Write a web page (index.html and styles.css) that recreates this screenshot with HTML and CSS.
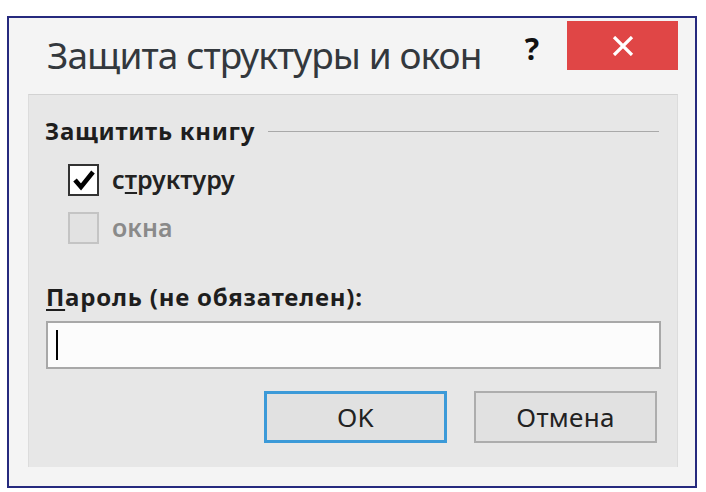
FILE: index.html
```html
<!DOCTYPE html>
<html lang="ru">
<head>
<meta charset="utf-8">
<title>Защита структуры и окон</title>
<link rel="stylesheet" href="styles.css">
</head>
<body>
<div class="window">
  <div class="titlebar">
    <div class="title">Защита структуры и окон</div>
    <div class="help">?</div>
    <div class="close">
      <svg width="24" height="20" viewBox="0 0 24 20"><path d="M3 1 L21 19 M21 1 L3 19" stroke="#fff" stroke-width="3.2" fill="none"/></svg>
    </div>
  </div>
  <div class="panel">
    <div class="group-header">
      <span class="group-label">Защитить книгу</span>
      <span class="group-line"></span>
    </div>
    <div class="options">
      <div class="check-row">
        <span class="box checked">
          <svg width="26" height="26" viewBox="0 0 26 26"><path d="M4 13 L10 20 L22 5" stroke="#000" stroke-width="4.6" fill="none" stroke-linejoin="miter"/></svg>
        </span>
        <span class="opt-label">с<u>т</u>руктуру</span>
      </div>
      <div class="check-row disabled">
        <span class="box"></span>
        <span class="opt-label">окна</span>
      </div>
    </div>
    <div class="pw-label"><u>П</u>ароль (не обязателен):</div>
    <div class="input"><span class="caret"></span></div>
    <div class="buttons">
      <button class="btn default">OK</button>
      <button class="btn">Отмена</button>
    </div>
  </div>
</div>
</body>
</html>
```

FILE: styles.css
```css
* { box-sizing: border-box; }
html, body { margin: 0; padding: 0; background: #fff; }
body {
  font-family: "Noto Sans", "Open Sans", "DejaVu Sans", sans-serif;
  color: #1e1e1e;
  padding: 16px 0 0 7px;
}
.window {
  width: 690px;
  height: 472px;
  border: 2px solid #262a7e;
  background: #f4f4f4;
  display: flex;
  flex-direction: column;
  padding: 0 17px 19px 19px;
}
.titlebar {
  height: 76px;
  display: flex;
  align-items: flex-start;
  flex: none;
}
.title {
  font-size: 37px;
  color: #33383d;
  padding-left: 19px;
  margin-top: 12px;
  line-height: 50px;
  white-space: nowrap;
  letter-spacing: -0.9px;
}
.help {
  font-size: 30px;
  font-weight: 700;
  color: #111;
  margin-left: auto;
  margin-top: 11px;
  line-height: 40px;
  margin-right: 28px;
}
.close {
  width: 111px;
  height: 49px;
  margin-top: 3px;
  background: #e04646;
  display: flex;
  align-items: center;
  justify-content: center;
}
.panel {
  flex: 1;
  background: #e7e7e7;
  border-top: 1px solid #d2d2d2;
  border-left: 1px solid #dcdcdc;
  border-right: 1px solid #dcdcdc;
  padding: 20px 18px 0 16px;
  display: flex;
  flex-direction: column;
}
.group-header {
  display: flex;
  align-items: center;
  height: 30px;
}
.group-label {
  font-size: 24px;
  font-weight: 700;
  white-space: nowrap;
  letter-spacing: 0.7px;
}
.group-line {
  flex: 1;
  height: 1px;
  background: #a9a9a9;
  margin-left: 13px;
  margin-top: 2px;
}
.options {
  padding-left: 23px;
  margin-top: 11px;
}
.check-row {
  display: flex;
  align-items: center;
  gap: 13px;
  height: 48px;
}
.box {
  width: 31px;
  height: 32px;
  border: 2px solid #333;
  background: #fff;
  display: flex;
  align-items: center;
  justify-content: center;
}
.disabled .box {
  border: 2px solid #c4c4c4;
  background: #e2e2e2;
}
.opt-label {
  font-size: 25px;
  font-weight: 600;
  color: #222;
  line-height: 32px;
  padding-bottom: 2px;
}
.disabled .opt-label { color: #8a8a8a; }
.opt-label u, .pw-label u { text-decoration-thickness: 2px; text-underline-offset: 3px; }
.pw-label {
  font-size: 24px;
  font-weight: 700;
  margin-top: 30px;
  line-height: 30px;
  padding-left: 1px;
  letter-spacing: 0.8px;
}
.input {
  margin-top: 9px;
  width: 615px;
  height: 48px;
  border: 2px solid #a8a8a8;
  background: #fcfcfc;
  margin-left: 1px;
  display: flex;
  align-items: center;
  padding-left: 8px;
}
.caret {
  width: 2px;
  height: 30px;
  background: #000;
}
.buttons {
  display: flex;
  justify-content: flex-end;
  gap: 27px;
  margin-top: 22px;
  padding-right: 2px;
}
.btn {
  width: 183px;
  height: 52px;
  font-family: inherit;
  font-size: 26px;
  letter-spacing: 0.3px;
  color: #222;
  background: #e1e1e1;
  border: 2px solid #adadad;
  padding: 0;
}
.btn.default {
  border: 3px solid #3c9ad8;
}
```
